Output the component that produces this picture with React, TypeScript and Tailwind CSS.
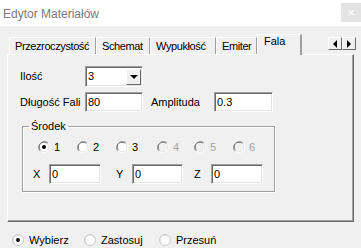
import React from 'react'

const sunken =
    'bg-white border border-t-[#a0a0a0] border-l-[#a0a0a0] border-b-white border-r-white shadow-[inset_1px_1px_0_#696969,inset_-1px_-1px_0_#e3e3e3]'

function Radio({ checked = false, disabled = false, flat = false }: { checked?: boolean; disabled?: boolean; flat?: boolean }) {
    if (flat) {
        return (
            <svg width="12" height="12" viewBox="0 0 12 12" className="shrink-0">
                <circle cx="6" cy="6" r="5.5" fill="#fff" stroke="#c8c8c8" />
                <path d="M2.6 9.4 A4.8 4.8 0 0 1 9.4 2.6" fill="none" stroke="#dadada" strokeWidth="1" />
                {checked && <circle cx="6" cy="6" r="2" fill="#111" />}
            </svg>
        )
    }
    return (
        <svg width="12" height="12" viewBox="0 0 12 12" className="shrink-0">
            <circle cx="6" cy="6" r="6" fill="#ffffff" />
            <path d="M1.8 10.2 A6 6 0 0 1 10.2 1.8" fill="none" stroke="#a0a0a0" strokeWidth="1" />
            <path d="M2.6 9.4 A4.8 4.8 0 0 1 9.4 2.6" fill="none" stroke="#696969" strokeWidth="1" />
            <path d="M9.4 2.6 A4.8 4.8 0 0 1 2.6 9.4" fill="none" stroke="#e3e3e3" strokeWidth="1" />
            <circle cx="6" cy="6" r="3.9" fill={disabled ? '#f0f0f0' : '#fff'} />
            {checked && <circle cx="6" cy="6" r="2" fill="#000" />}
        </svg>
    )
}

function Field({ value, w, h = 20 }: { value: string; w: number; h?: number }) {
    return (
        <div className={`${sunken} flex items-center pl-[2px] shrink-0`} style={{ width: w, height: h }}>
            {value}
        </div>
    )
}

export default function App() {
    const tabs = [
        { label: 'Przezroczystość', w: 87 },
        { label: 'Schemat', w: 54 },
        { label: 'Wypukłość', w: 66 },
        { label: 'Emiter', w: 41 },
    ]
    const points = [
        { n: '1', w: 39, checked: true },
        { n: '2', w: 39 },
        { n: '3', w: 41 },
        { n: '4', w: 37, disabled: true },
        { n: '5', w: 39, disabled: true },
        { n: '6', w: 39, disabled: true },
    ]

    return (
        <div className="w-[361px] h-[248px] bg-[#f0f0f0] overflow-hidden text-[11px] text-black font-['Liberation_Sans',Arial,sans-serif]">
            <div className="h-[26px] bg-white flex items-start justify-between">
                <span className="pl-[3px] pt-[5px] text-[12px] text-[#7a7a7a]">Edytor Materiałów</span>
                <div className="mt-[3px] w-[20px] h-[19px] bg-[#e3e3e3] flex items-center justify-center text-white text-[13px] leading-none">
                    ×
                </div>
            </div>

            <div className="pl-[7px] pt-[8px]">
                {/* tab strip */}
                <div className="h-[20px] flex items-end relative">
                    <div className="w-[2px]" />
                    {tabs.map((t) => (
                        <div
                            key={t.label}
                            className="h-[17px] border-t border-l border-white border-r border-r-[#a0a0a0] pl-[5px] pt-[1px] leading-[15px] tracking-[-0.4px] whitespace-nowrap overflow-hidden shrink-0"
                            style={{ width: t.w }}
                        >
                            {t.label}
                        </div>
                    ))}
                    <div className="h-[21px] w-[45px] -mb-[1px] bg-[#f0f0f0] border-t border-l border-white border-r-2 border-r-[#a0a0a0] pl-[6px] pt-[0px] leading-[13px] shrink-0 relative z-10">
                        Fala
                    </div>
                    <div className="flex-1 self-stretch flex justify-end items-start pt-[3px] pr-[5px]">
                        <div className="flex">
                            <div className="w-[14px] h-[13px] bg-[#f0f0f0] border border-white border-r-[#696969] border-b-[#696969] flex items-center justify-center">
                                <span className="block w-0 h-0 border-y-[4px] border-y-transparent border-r-[4px] border-r-black" />
                            </div>
                            <div className="w-[14px] h-[13px] bg-[#f0f0f0] border border-white border-r-[#696969] border-b-[#696969] flex items-center justify-center">
                                <span className="block w-0 h-0 border-y-[4px] border-y-transparent border-l-[4px] border-l-black" />
                            </div>
                        </div>
                    </div>
                </div>

                {/* panel */}
                <div className="w-[347px] h-[168px] border-t border-l border-white border-r border-b border-r-[#696969] border-b-[#696969] shadow-[inset_-1px_-1px_0_#a0a0a0] pl-[12px] pt-[11px]">
                    <div className="flex items-center h-[21px]">
                        <span className="w-[65px]">Ilość</span>
                        <div className={`${sunken} w-[58px] h-[21px] flex items-center justify-between pl-[2px] pr-[1px]`}>
                            <span>3</span>
                            <div className="w-[15px] h-[16px] bg-[#f0f0f0] border border-white border-r-[#696969] border-b-[#696969] flex items-center justify-center">
                                <span className="block w-0 h-0 border-x-[4px] border-x-transparent border-t-[4px] border-t-black" />
                            </div>
                        </div>
                    </div>

                    <div className="flex items-center h-[20px] mt-[5px]">
                        <span className="w-[65px]">Długość Fali</span>
                        <Field value="80" w={58} />
                        <span className="w-[63px] ml-[8px]">Amplituda</span>
                        <Field value="0.3" w={59} />
                    </div>

                    {/* group box */}
                    <div className="relative mt-[14px] ml-[2px] w-[253px] h-[66px] border border-[#a0a0a0] shadow-[1px_1px_0_#fff,inset_1px_1px_0_#fff] pl-[15px] pt-[13px]">
                        <span className="absolute -top-[8px] left-[6px] px-[2px] bg-[#f0f0f0] leading-[14px]">Środek</span>
                        <div className="flex items-center h-[14px]">
                            {points.map((p) => (
                                <div key={p.n} className="flex items-center gap-[4px] shrink-0" style={{ width: p.w }}>
                                    <Radio checked={p.checked} disabled={p.disabled} />
                                    <span className={p.disabled ? 'text-[#a0a0a0]' : ''}>{p.n}</span>
                                </div>
                            ))}
                        </div>
                        <div className="flex items-center h-[20px] mt-[10px] -ml-[5px]">
                            <span className="w-[16px]">X</span>
                            <Field value="0" w={52} />
                            <span className="w-[16px] ml-[15px]">Y</span>
                            <Field value="0" w={51} />
                            <span className="w-[17px] ml-[11px]">Z</span>
                            <Field value="0" w={52} />
                        </div>
                    </div>
                </div>
            </div>

            {/* bottom mode */}
            <div className="flex items-center h-[14px] mt-[11px] pl-[12px]">
                <div className="flex items-center gap-[5px] w-[72px]">
                    <Radio checked flat />
                    <span>Wybierz</span>
                </div>
                <div className="flex items-center gap-[5px] w-[75px]">
                    <Radio flat />
                    <span>Zastosuj</span>
                </div>
                <div className="flex items-center gap-[5px]">
                    <Radio flat />
                    <span>Przesuń</span>
                </div>
            </div>
        </div>
    )
}
